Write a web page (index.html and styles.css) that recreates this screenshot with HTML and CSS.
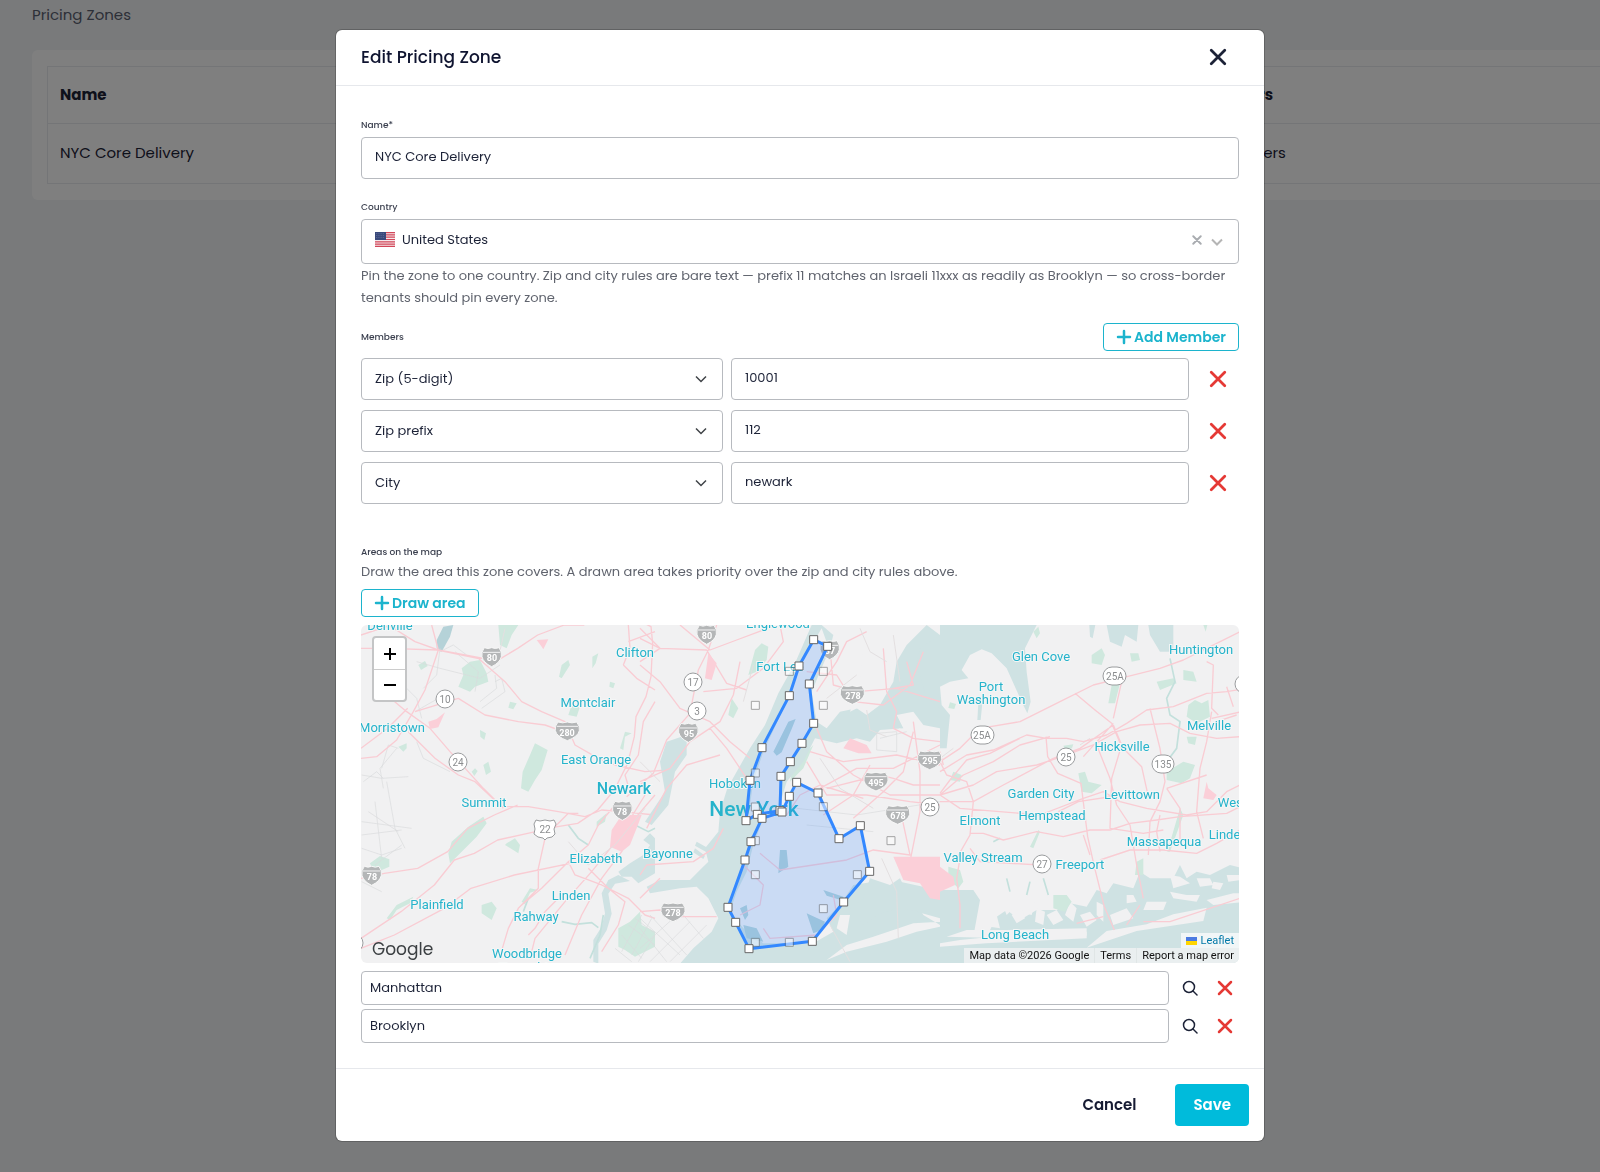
FILE: index.html
```html
<!DOCTYPE html>
<html lang="en">
<head>
<meta charset="utf-8">
<meta name="viewport" content="width=device-width, initial-scale=1">
<title>Pricing Zones</title>
<link rel="stylesheet" href="styles.css">
</head>
<body>
<svg class="sprite" aria-hidden="true">
  <symbol id="cross" viewBox="0 0 16 16"><path d="M2 2l12 12M14 2L2 14"/></symbol>
  <symbol id="plus" viewBox="0 0 16 16"><path d="M8 2v12M2 8h12"/></symbol>
  <symbol id="chevron" viewBox="0 0 12 12"><path d="M1 3.500l5 5 5-5"/></symbol>
  <symbol id="search" viewBox="0 0 16 16"><circle cx="7" cy="7" r="5.500"/><path d="M11 11l4 4"/></symbol>
  <g id="interstate"><path d="M-22-27q11 5 22 0 11 5 22 0 10 13 7 27Q25 18 0 30-25 18-29 0q-3-14 7-27z" fill="#b4b6b7" stroke="#f7f7f7" stroke-width="3"/><path d="M-26-13h52" stroke="#f4f4f4" stroke-width="3"/></g>
  <g id="interstate-wide"><path d="M-28-26q14 5 28 0 14 5 28 0 11 13 8 26Q32 18 0 30-32 18-36 0q-3-13 8-26z" fill="#b4b6b7" stroke="#f7f7f7" stroke-width="3"/><path d="M-32-13h64" stroke="#f4f4f4" stroke-width="3"/></g>
</svg>

<main class="page">
  <h1 class="page-title">Pricing Zones</h1>
  <section class="card">
    <table class="zones">
      <thead><tr><th class="zones-name">Name</th><th>Members</th></tr></thead>
      <tbody><tr><td>NYC Core Delivery</td><td>3 members</td></tr></tbody>
    </table>
  </section>
</main>

<div class="overlay">
<form class="modal" role="dialog" aria-labelledby="modal-title">
  <header class="modal-header">
    <h2 class="modal-title" id="modal-title">Edit Pricing Zone</h2>
    <button class="icon-button close" type="button" aria-label="Close"><svg class="icon"><use href="#cross"/></svg></button>
  </header>

  <div class="modal-body">
    <div class="field">
      <label class="label" for="zone-name">Name*</label>
      <input class="control" id="zone-name" type="text" value="NYC Core Delivery">
    </div>

    <div class="field">
      <label class="label" for="country">Country</label>
      <div class="select-wrap">
        <select class="control control-country" id="country"><option>United States</option></select>
        <svg class="flag" viewBox="0 0 20 15" aria-hidden="true">
          <rect width="20" height="15" fill="#f6e9eb"/>
          <path d="M0 .6h20M0 2.900h20M0 5.200h20M0 7.500h20M0 9.800h20M0 12.100h20M0 14.400h20" stroke="#d2475a" stroke-width="1.200"/>
          <rect width="11" height="8" fill="#3a4a7c"/>
          <path d="M1 1.500h9M1 3.500h9M1 5.500h9" stroke="#7682a8" stroke-width=".6" stroke-dasharray=".8 1"/>
        </svg>
        <button class="clear" type="button" aria-label="Clear country"><svg class="icon"><use href="#cross"/></svg></button>
        <svg class="chevron chevron-light" aria-hidden="true"><use href="#chevron"/></svg>
      </div>
      <p class="help">Pin the zone to one country. Zip and city rules are bare text — prefix 11 matches an Israeli 11xxx as readily as Brooklyn — so cross-border tenants should pin every zone.</p>
    </div>

    <section class="members">
      <div class="section-head">
        <h3 class="label">Members</h3>
        <button class="outline-button" type="button"><svg class="icon"><use href="#plus"/></svg>Add Member</button>
      </div>
      <div class="member-row">
        <div class="select-wrap"><select class="control" aria-label="Rule type"><option>Zip (5-digit)</option></select><svg class="chevron" aria-hidden="true"><use href="#chevron"/></svg></div>
        <input class="control" type="text" value="10001" aria-label="Rule value">
        <button class="icon-button danger" type="button" aria-label="Remove member"><svg class="icon"><use href="#cross"/></svg></button>
      </div>
      <div class="member-row">
        <div class="select-wrap"><select class="control" aria-label="Rule type"><option>Zip prefix</option></select><svg class="chevron" aria-hidden="true"><use href="#chevron"/></svg></div>
        <input class="control" type="text" value="112" aria-label="Rule value">
        <button class="icon-button danger" type="button" aria-label="Remove member"><svg class="icon"><use href="#cross"/></svg></button>
      </div>
      <div class="member-row">
        <div class="select-wrap"><select class="control" aria-label="Rule type"><option>City</option></select><svg class="chevron" aria-hidden="true"><use href="#chevron"/></svg></div>
        <input class="control" type="text" value="newark" aria-label="Rule value">
        <button class="icon-button danger" type="button" aria-label="Remove member"><svg class="icon"><use href="#cross"/></svg></button>
      </div>
    </section>

    <section class="areas">
      <h3 class="label">Areas on the map</h3>
      <p class="help">Draw the area this zone covers. A drawn area takes priority over the zip and city rules above.</p>
      <button class="outline-button" type="button"><svg class="icon"><use href="#plus"/></svg>Draw area</button>

      <div class="map">
        <svg class="map-canvas" viewBox="0 0 878 338" preserveAspectRatio="xMidYMid slice" role="img" aria-label="Map of the New York area">
          <rect width="878" height="338" fill="#f1f1f2"/>

          <!-- west: New Jersey -->
          <g transform="scale(.33333) translate(-18 -30)">
            <g class="park">
              <path d="M430 30h60l-20 30-15 40-20-10zM345 140l30-5 20 40 5 25-40 15-15 15-35-15 15-35-5-20zM620 150l20-15 5 15-25 40-8-5zM712 125l18-10-8 30-10 15zM765 200l15 5-5 15-12-5zM465 260l20 5-10 18-15-5zM525 420l15-35 38 20-18 60-20 30-20 35-22-10 5-50zM290 680l50-45 45-30 10 20-30 40-60 60-20 20-5-30zM455 685l25-15 15 20-5 25-40-25zM45 745l30-22 28 10v22l-45 20zM380 870l30-10 15 20-15 35-30-20zM95 910l30-40 50-25-10 20-40 20-20 30zM350 470l10-10 8 8-10 15zM385 450l15-10 8 30-15 10zM130 395l25-10v15l-10 10zM375 345l18 10-5 20-12-10zM810 350l20 5-20 10-5 40-10-5zM190 150l20-12 8 15-20 12zM725 620l30-25-5 25-25 15zM500 860l25-40 25 5-25 8-15 35zM640 300l10-30 25 5-10 30zM790 940l35-20 30-30 5 40 40 20v45l-60 30-30-20-20-10z"/>
            </g>
            <path class="deep" d="M245 75l20-40 30-5-10 35-25 45-15-10z"/>
            <path class="water" d="M900 670l-15-15-20 20 20 15-20 30-40 25-35 25 10 15 30 0 20 20 50-30zM790 780l-30 15-20 40 10 60-10 40-25 40 0 65 15 6 0-60 25-40 15-50-10-60 20-30 45-8z"/>
            <path class="creek" d="M620 920l40 8 50-5 20 15M640 630l30 40 30 20M840 630l40 20 20-10M520 850l-15 40M745 900l-10 60-30 70"/>
            <path class="minor" d="M185 140l70 20 120 30 60-40M180 290l70-40M375 260l50-40-5-40M20 480l60 10 80-5M125 400l-50 60 10 60M20 620l150 20M20 660l120-15M40 590l90 60M95 500l25 140 30 60M20 700l60 20 60-20M185 380l20 50 80 40M60 560l20 170M300 110l70 60-10 60M130 400l-30-10-20 70M20 800l60 30M200 310l-15-60-40-40M25 500l40-30 20 20M60 750l80-60M255 100l-10 80-40 40M255 110l40-20 40 30M420 200l20-10 10 40-70 50"/>
            <g class="minor">
              <path d="M820 930l80 60M800 960l60 70M840 910l60 45M780 1000l50 40M830 1020l60-110M850 1040l50-80M800 1010l60-110"/>
            </g>
            <g class="road">
              <path d="M18 100l80 0 150 5 120 25 70 0 50-30 60-40 80-30h60M18 60l90-30M100 30l80 50 70 25 160 30M230 30l20 75-40 120-35 65-50 85-60 50-47 5M100 180l-5 60 60 50 70 50 60 70 100 110 60 60M18 400l80-60 60-60M180 290l130-40 80 50 100 20 80 10 70 25M370 130l80 70 50 60 60 30 70 30 30 70 70 40 50 20 90 20 70-5M160 350l80 80 70 50 50 20 80 75 80 0 90 15 80 15 50-20 60 5 100 10M18 790l70-15 100-15 90-50 60-70 80-40 70-30M18 970l120-80 100-80 60-75 60-20 70-40 90-20 90-20 60-10 60-40 50-60 40-80 20-80 5-60 30-60 15-60 5-100-5-50-120-60-30-20M805 150l40 40 55 35M820 30l5 70-20 50M820 80l80-30M18 1000l100-40 150-80 80-60 130-40 240-50M570 670l-20 90 0 60-60 60-30 60-18 60M500 870l60-50 80-80 60-50 30-60 50-60M640 740l20 40 80 30 80 40 50 50 30 10M900 540l-60 70-40 100-60 80-60 110-50 120M870 540l-80 130-80 100-80 90-90 110-15 60M900 260l-35 60-15 100-40 60 15 50M520 960l20-20 30-50 40-40M700 760l60 60 50 40-20 70-50 80M590 645l50-50 30 0"/>
            </g>
            <path class="airport" d="M800 600h60l-15 40-20 50-25 20-35-15 5-50zM545 75l35-2-15 30-8-12zM220 320l25-8 25-20-20 45-25 5z"/>
            <path class="rail" d="M640 680l60 70 80-60 90-110M450 40l-20 90"/>
          </g>

          <!-- centre: Hudson, Manhattan, Brooklyn, Queens -->
          <g transform="scale(.33333) translate(837 -30)">
            <g class="park">
              <path d="M345 105l20-20 20 10-5 40-30 35-25 10zM275 250l20 30-15 30-15-10zM690 200l15 10-10 40-12-10zM460 450l60-60-30 70-40 40zM630 480l25 5 5 40-20 25-25-20zM560 120l10-20 5 30z"/>
            </g>
            <path class="water" d="M515 30L465 145 415 235 375 330 330 400 290 470 262 520 240 590 235 650 195 700 205 740 185 760 150 795 60 795 20 815 30 835 120 820 170 815 205 850 235 910 215 950 160 1000 120 1046H900V600L860 700 820 760 740 775 700 800 640 810 600 870 560 910 580 950 520 985 370 985 310 940 270 890 290 830 320 770 340 690 370 610 420 590 425 550 440 500 490 440 525 370 590 385 650 370 690 380 720 345 790 340 770 300 820 290 850 330 900 340V60L860 30 800 90 770 140 760 200 720 270 680 300 650 280 600 290 560 340 530 320 515 230 570 100 580 60 545 30z"/>
            <!-- Manhattan -->
            <path class="land" d="M545 40L565 95 505 200 515 330 490 380 420 485 415 580 350 600 325 605 340 500 370 410 445 250 480 150z"/>
            <path class="land" d="M640 30l30 60-10 110-30 90 60-30 50-30 15-90 30-80 35-30z"/>
            <path class="land" d="M590 400l100 0 90-60 60 60 60 20v300l-130 40-80 20-80-30z"/>
            <!-- Rockaway, Jamaica and the south shore -->
            <path class="land" d="M560 1035l60-25 120-30 90-30 70-15v-15l-80 5-120 40-80 25zM600 900l30 0-10 60-30-20zM680 720h220v210l-50-30-30-50-60-20-60-30-60-20z"/>
            <path class="water" d="M690 790l60 20 30-20 20 40 60 30-10 30-80-10-60 20-40 30-40-50 40-30zM780 800l90 20 30 30v60l-70-20zM840 100l60-40v220l-40-30-30-100z"/>
            <path class="water" d="M60 440l20-60 60-20 0 60-35 50-20 100-50 60-20-10 60-90zM170 680l35 20-5 12-35-20zM165 700l30 22-5 10-30-20z"/>
            <path class="deep" d="M420 705l20 0 5 50-30 20zM300 880l20-10 5 30-10 15zM310 930l40 10 20 40-50-10zM400 410l45-90 22-8-12 30-30 70-15 10z"/>
            <path class="deep" d="M500 895l55 25-10 25-25 10zM550 825l60 20 0 12-50-15z"/>
            <path class="rail" d="M680 285l10 60 50 20M540 430l60 90 100 60M725 730l45 100 5 140M570 930l60 110M760 60l20 140"/>
            <path class="minor" d="M710 355l60-5v60l-60-5zM720 370l80-20M0 940l80 100M0 910l120 110M30 900l110 120M0 1000l100-90M30 1040l120-120M90 1040l110-110M130 900l60 70M470 580l180 20 250-40M500 630l200 20"/>
            <g class="road">
              <path d="M0 70l60 30 140 5 60 100 60 20M230 30l-25 75-30 60-25 130-70 80-40 100-80 70M0 150l60 50 60 80 90 40 60 60 60 50M120 30l90 75 80-30 120-45M60 100l-60 40M190 230l100-10 80-60 60-80-10-50M0 500l90-40 60-80 90-60 40-80 20-100M20 640l60-120 60-70 100-30M210 340l50 60 60 90M0 780l20-30 140-10 60-40 30-60M0 890l60-5 60 20 110 0M530 230l60-90 30-60 60-30M570 100l10 110 70 20 120-10 130 40M500 170l90 10 50 80 90 10 80-60 40-100M730 100l10 130 30 60-10 50 60 30 80 10M510 410l100 30 160-20 130 30M530 340l30 70 80 70 110 60 150 0M560 520l160-40 40 10 60 20 80 0M500 440l60 100 120 0 130 20 90 10M540 520l110-60 110 0 140-70M780 580l30 140-110-15-80 30-200 30-60-50M640 610l90-80 60-60 30-120M370 940l20 30 140-10 60-60-10-60M310 750l60 60-10 60-60 30M440 600l40-60 60-30 130 40M820 320l20 150 0 120-30 150M800 140l20 70-60 10M690 450l-50 90-90 60M0 40l60 60M60 790l-60 60"/>
            </g>
            <path class="airport" d="M205 115l25 30-15 50-20-5zM610 400l20-30 50 20 15 25-40 0zM760 725h140v130l-30-5-30-45-50-10z"/>
            <path class="rail" d="M660 40l30 70 50 30M340 150l-30 110M0 440l60 60M560 250l90-70"/>
          </g>

          <!-- east: Long Island -->
          <g transform="scale(.33333) translate(1737 -30)">
            <path class="water" d="M0 30H290L255 100 260 170 272 260 262 295 245 260 200 160 155 115 125 103 90 120 65 165 85 190 30 200 0 215 5 270 30 300 20 400 0 400zM500 30h95l-5 50-35-20-10 35-35-15zM625 30h75v80l-40 0-30-50zM115 265l12 0-5 50-10 0zM448 30h18l-8 40-8-5zM0 985l60-10 150-15 230-10v20l-300 15-140 10v60h920V860l-100 10-20-15 80-20h60V740l-30 20-40-10-60 30-40-10-30 20-20-40-20 40-70 0-30-20-20 50-60-15-20 30-30-10-30 50-50-10-40 20-60 0-50 30-40-30-30 20-30 60-40 0 20-110-20-30H0z"/>
            <!-- barrier islands and marshes -->
            <path class="land" d="M440 998l60-50 120-20 80-30 100-20-10 40-200 30zM20 965l60-20 120 0 240-5v22l-240 8zM180 850l25 0 15 30-20 20zM215 900l30-20 10 30-25 15zM255 850l30 10-10 40-20-5zM290 880l25 10-5 40-25-10zM320 900l30-15 20 30-30 15zM390 860l20 20-10 40-25-20zM420 900l30-10 20 25-30 20zM150 890l20 10 10 40-30-5zM340 860l40 8-10 15-35-8zM510 900l50-20 20 30-60 20zM470 860l20 10 0 50-20-20zM620 860l60 0-10 25-60 0zM690 780l30 5 30 20-50 15zM770 790l40 0 10 20-40 5zM690 830l50 10 40 0-10 20-70-10zM820 800l30 5-10 20-25-5zM560 840l20 0 10 20-30 5zM860 780h40v15l-35 5z"/>
            <g class="park">
              <path d="M280 50l15-15 5 20-10 15zM455 120l30-20 10 20-10 30-30-5zM570 115l25 0 5 20-25 5zM515 210l25-5-15 60-20 0zM650 200l50-10 10 15-50 20zM730 165l30 5 10 30-40-5zM745 270l20-15 20 10 20-10 5 50-40 20-30-20zM680 470l50-30 35 10-15 40-25 15-45-10zM740 365l30 0-5 25-20-5zM415 475l20-5 10 30 40 10-30 25-30-5zM40 470l25 10-5 20-30-5zM720 580l10 20-40 110-8 0zM590 740l20-10 0 50-25 0zM25 755l35 10 10 35-15 20-30-30zM340 840l40 0 15 20-20 30-35-10zM30 262l18 5-5 15-18-3zM370 392l30-4-4 12-20 6zM270 695l25-50 5 5-20 50zM790 30l12 0-5 20z"/>
            </g>
            <path class="creek" d="M690 130l15 70-25 50 10 50 30 20-10 80-30 40M160 680l20-10M200 790l10 40M270 800l-10 40M310 790l15 50"/>
            <path class="airport" d="M0 755l40 30 5 25-45 20zM800 500l5 20 25 20-10 15-30-5z"/>
            <path class="rail" d="M0 430l40-30M420 390l30-20"/>
            <g class="road">
              <path d="M0 440l60-40 60-60 120-20 120-60 100-50 80-20 120-30 70-25 100-50 70-35M0 470l80-50 80-15 100-45 60 10 60 0 50 10 70-20 60-35 60-40 80-10 100-40 60-5 60-10 60-20M0 540l70-60 90-40 80-50 90-25M0 540l100-30 70-40 120-20 90-30 80-30 70-40 70-20 90-5 60 30 80 15 140-10M0 535l30-40 50-60 70-20 90-45M0 560l100 0 90-50 150-80 80-30 100-70M0 540l60 40 240 20 130-50 60-20 50 30 80 20 120 20 60-10 60-60 40-20M90 655l40 0 60 20 100-25 80 15 80-20 60 0 60-20 80-10 70-10 140-10 60-30 30-20M0 440l20 40 60 20 20 60-10 100-40 70M318 365l5 60 30 50 70 30 20 160 20 90 30 120 30 70M405 235l60 50 50 40 30 70 60 60 20 90M520 325l-90 100M545 200l-25 110M520 330l25 60-30 100-5 150 100 15 60-10M630 280l30 120 15 100-15 60-30 60-5 100M470 390l40 100 20 80 40 60 20 120 20 100M800 140l20 10-5 130 20 20M815 290l-15 90-20 80-10 130 20 80M815 310l90-20M680 520l40 60 0 100M680 520l120-40M660 600l-10 50 10 60M60 730l-10 60 10 80 0 70M90 700l30 40 180 10M480 735l90-30 100 0 100 10 60-30 70-40M450 720l-20-60M610 920l80 0 210-70M410 925l80-20M560 930l40-60M0 410l10 40M830 320l60-20M545 540l-130 20-60 30M860 215l20 60"/>
            </g>
          </g>

          <g class="shields">
            <g transform="scale(.33333)">
              <use href="#interstate" x="392" y="95"/><use href="#interstate-wide" x="619" y="317"/><use href="#interstate" x="784" y="556"/><use href="#interstate" x="32" y="751"/>
              <use href="#interstate" x="1037" y="28"/><use href="#interstate" x="982" y="322"/><use href="#interstate-wide" x="1474" y="208"/><use href="#interstate-wide" x="936" y="860"/><use href="#interstate-wide" x="1545" y="468"/><use href="#interstate-wide" x="1610" y="568"/><use href="#interstate-wide" x="1706" y="404"/><use href="#interstate" x="1406" y="74"/>
            </g>
            <g class="shield-white">
              <circle cx="84" cy="74" r="9"/><circle cx="97" cy="137" r="9"/><circle cx="332" cy="57" r="9"/><circle cx="336" cy="86" r="9"/><circle cx="569" cy="182" r="9"/><circle cx="705" cy="132" r="9"/><circle cx="681" cy="239" r="9"/><circle cx="-7" cy="318" r="9"/>
              <rect x="742" y="42" width="23" height="18" rx="9"/><rect x="610" y="101" width="23" height="18" rx="9"/><rect x="791" y="130" width="22" height="18" rx="9"/><rect x="874" y="50" width="22" height="18" rx="9"/>
              <path d="M175 195l4 1 5-1 5 1 4-1 2 4-2 5 1 5-3 3-5 1-2 2-2-2-5-1-4-3 1-5-1-5z"/>
            </g>
            <g class="shield-text">
              <text x="84" y="78">10</text><text x="97" y="141">24</text><text x="332" y="61">17</text><text x="336" y="90">3</text><text x="569" y="186">25</text><text x="705" y="136">25</text><text x="681" y="243">27</text><text x="754" y="55">25A</text><text x="621" y="114">25A</text><text x="802" y="143">135</text><text x="184" y="208">22</text>
            </g>
            <g class="interstate-text">
              <text x="131" y="36">80</text><text x="206" y="111">280</text><text x="261" y="190">78</text><text x="11" y="255">78</text><text x="346" y="14">80</text><text x="328" y="112">95</text><text x="492" y="74">278</text><text x="312" y="291">278</text><text x="515" y="161">495</text><text x="537" y="194">678</text><text x="569" y="139">295</text><text x="469" y="29">87</text>
            </g>
          </g>

          <g class="place">
            <text x="29" y="5">Denville</text><text x="274" y="32">Clifton</text><text x="227" y="82">Montclair</text><text x="31" y="107">Morristown</text><text x="235" y="139">East Orange</text><text x="123" y="182">Summit</text><text x="235" y="238">Elizabeth</text><text x="307" y="233">Bayonne</text><text x="210" y="275">Linden</text><text x="76" y="284">Plainfield</text><text x="175" y="296">Rahway</text><text x="166" y="333">Woodbridge</text><text x="166" y="347">Township</text>
            <text x="417" y="3">Englewood</text><text x="419" y="46">Fort Lee</text><text x="374" y="163">Hoboken</text>
            <text x="680" y="36">Glen Cove</text><text x="630" y="66">Port</text><text x="630" y="79">Washington</text><text x="840" y="29">Huntington</text><text x="848" y="105">Melville</text><text x="761" y="126">Hicksville</text><text x="680" y="173">Garden City</text><text x="771" y="174">Levittown</text><text x="691" y="195">Hempstead</text><text x="619" y="200">Elmont</text><text x="803" y="221">Massapequa</text><text x="622" y="237">Valley Stream</text><text x="719" y="244">Freeport</text><text x="654" y="314">Long Beach</text><text x="885" y="182">West Islip</text><text x="882" y="214">Lindenhurst</text>
            <text class="place-newark" x="263" y="169">Newark</text><text class="place-city" x="393" y="191">New York</text>
          </g>

          <!-- drawn areas, with vertex and midpoint handles -->
          <g transform="scale(.33333) translate(837 -30)">
            <path class="area" d="M521 74L563 94 508 207 521 325 486 385 451 440 423 484 420 587 352 598 318 617 330 496 366 398 448 242 477 153z"/>
            <path class="area" d="M470 502L534 534 597 671 661 632 689 769 611 861 517 979 327 1001 287 922 264 877 315 735 333 680 366 610 426 591 448 544z"/>
            <g class="handle-mid">
              <path d="M436 157h24v24h-24zM538 157h24v24h-24zM334 259h24v24h-24zM538 259h24v24h-24zM334 462h24v24h-24zM334 564h24v24h-24zM538 563h24v24h-24zM334 665h24v24h-24zM741 665h24v24h-24zM334 767h24v24h-24zM640 767h24v24h-24zM538 869h24v24h-24zM334 970h24v24h-24zM436 970h24v24h-24z"/>
            </g>
            <g class="handle">
              <path d="M509 62h24v24h-24zM551 82h24v24h-24zM496 195h24v24h-24zM509 313h24v24h-24zM474 373h24v24h-24zM439 428h24v24h-24zM411 472h24v24h-24zM408 575h24v24h-24zM340 586h24v24h-24zM306 605h24v24h-24zM318 484h24v24h-24zM354 386h24v24h-24zM436 230h24v24h-24zM465 141h24v24h-24z"/>
              <path d="M458 490h24v24h-24zM522 522h24v24h-24zM585 659h24v24h-24zM649 620h24v24h-24zM677 757h24v24h-24zM599 849h24v24h-24zM505 967h24v24h-24zM315 989h24v24h-24zM275 910h24v24h-24zM252 865h24v24h-24zM303 723h24v24h-24zM321 668h24v24h-24zM354 598h24v24h-24zM436 532h24v24h-24z"/>
              <path d="M414 579h24v24h-24z"/>
            </g>
          </g>
        </svg>
        <div class="zoom">
          <button class="zoom-button" type="button" aria-label="Zoom in"><svg class="icon"><use href="#plus"/></svg></button>
          <button class="zoom-button" type="button" aria-label="Zoom out"><svg class="icon" viewBox="0 0 16 16"><path d="M2 8h12"/></svg></button>
        </div>
        <span class="map-logo">Google</span>
        <div class="credits">
          <a class="leaflet" href="#leaflet"><svg class="ua" viewBox="0 0 11 8" aria-hidden="true"><path fill="#4c7be1" d="M0 0h11v4H0z"/><path fill="#ffd500" d="M0 4h11v4H0z"/></svg>Leaflet</a>
          <div class="credit-bar"><span class="credit">Map data ©2026 Google</span><a class="credit" href="#terms">Terms</a><a class="credit" href="#report">Report a map error</a></div>
        </div>
      </div>

      <div class="area-row">
        <input class="control control-small" type="text" value="Manhattan" aria-label="Area name">
        <button class="icon-button find" type="button" aria-label="Show on map"><svg class="icon"><use href="#search"/></svg></button>
        <button class="icon-button danger" type="button" aria-label="Remove area"><svg class="icon"><use href="#cross"/></svg></button>
      </div>
      <div class="area-row">
        <input class="control control-small" type="text" value="Brooklyn" aria-label="Area name">
        <button class="icon-button find" type="button" aria-label="Show on map"><svg class="icon"><use href="#search"/></svg></button>
        <button class="icon-button danger" type="button" aria-label="Remove area"><svg class="icon"><use href="#cross"/></svg></button>
      </div>
    </section>
  </div>

  <footer class="modal-footer">
    <button class="button" type="button">Cancel</button>
    <button class="button button-primary" type="submit">Save</button>
  </footer>
</form>
</div>
</body>
</html>
```
FILE: styles.css
```css
* { box-sizing: border-box; }

body {
  margin: 0;
  min-height: 100vh;
  overflow: hidden;
  background: #f3f5f7;
  color: #1c2237;
  font-family: Poppins, Inter, sans-serif;
  font-size: 13px;
}

h1, h2, h3, p { margin: 0; }
button, input, select { font: inherit; color: inherit; }
button { padding: 0; border: 0; background: none; cursor: pointer; }

.sprite { position: absolute; width: 0; height: 0; }
.icon {
  display: block;
  width: 16px;
  height: 16px;
  fill: none;
  stroke: currentColor;
  stroke-width: 2;
  stroke-linecap: round;
}

/* Page behind the dialog */
.page { padding-left: 32px; }
.page-title {
  padding: 3px 0 23px;
  font-size: 15px;
  font-weight: 400;
  line-height: 24px;
  color: #5a6070;
}
.card {
  padding: 16px 0 16px 15px;
  border-radius: 6px 0 0 6px;
  background: #fff;
}
.zones {
  width: 100%;
  border: 1px solid #e9ebee;
  border-right: 0;
  border-spacing: 0;
  font-size: 15px;
  text-align: left;
}
.zones th, .zones td { padding: 0 12px 2px; }
.zones th { height: 56px; font-weight: 700; }
.zones td { height: 60px; border-top: 1px solid #e9ebee; }
.zones th.zones-name { width: 1140px; }

/* Dialog */
.overlay {
  position: fixed;
  inset: 0;
  overflow: auto;
  padding: 30px 16px;
  background: rgba(0, 0, 0, .5);
}
.modal {
  max-width: 928px;
  margin: 0 auto;
  border-radius: 6px;
  background: #fff;
  box-shadow: 0 0 0 1px rgba(0, 0, 0, .2);
}
.modal-header {
  display: flex;
  align-items: center;
  justify-content: space-between;
  height: 56px;
  padding: 0 25px 2px;
  border-bottom: 1px solid #e6e8ec;
}
.modal-title { font-size: 17px; font-weight: 500; color: #0f1430; }
.modal-body { padding: 31px 25px 21px; }
.modal-footer {
  display: flex;
  justify-content: flex-end;
  gap: 21px;
  padding: 15px;
  border-top: 1px solid #e6e8ec;
}

/* Form */
.field + .field { margin-top: 20px; }
.label {
  display: block;
  font-size: 9px;
  font-weight: 500;
  line-height: 16px;
  color: #3a3f4e;
}
.field .label { margin-bottom: 4px; }
.control {
  display: block;
  width: 100%;
  min-width: 0;
  height: 42px;
  padding: 0 13px 2px;
  border: 1px solid #b7babf;
  border-radius: 4px;
  background: #fff;
  appearance: none;
}
.control-country { height: 45px; padding: 0 40px 4px; }
.control-small { height: 34px; padding: 0 8px 1px; }
.help { margin-top: 1px; line-height: 22px; color: #60646e; }

.select-wrap { position: relative; }
.chevron {
  position: absolute;
  top: 0;
  right: 16px;
  bottom: 0;
  width: 12px;
  height: 12px;
  margin: auto;
  fill: none;
  stroke: #3f4347;
  stroke-width: 1.5;
  pointer-events: none;
}
.chevron-light { stroke: #b5b5b5; stroke-width: 2; }
.flag {
  position: absolute;
  top: 13px;
  left: 14px;
  width: 20px;
  height: 15px;
  pointer-events: none;
}
.clear {
  position: absolute;
  top: 16px;
  right: 37px;
  color: #a9acb0;
}
.clear .icon { width: 10px; height: 10px; stroke-width: 3; }

.icon-button { display: grid; place-items: center; min-height: 28px; }
.close { width: 42px; }
.close .icon, .member-row .icon { width: 18px; height: 18px; }
.close .icon { stroke-width: 2.5; }
.danger { color: #e53935; }
.danger .icon { stroke-width: 2.5; }
.find .icon { stroke-width: 1.5; }

.members { margin-top: 14px; }
.section-head {
  display: flex;
  align-items: center;
  justify-content: space-between;
  margin-bottom: 7px;
}
.outline-button {
  display: flex;
  align-items: center;
  gap: 2px;
  width: fit-content;
  height: 28px;
  padding: 0 12px;
  border: 1px solid #1cb4cd;
  border-radius: 4px;
  color: #1cb4cd;
  font-size: 14px;
  font-weight: 600;
}
.outline-button .icon { stroke-width: 2.5; }
.member-row {
  display: grid;
  grid-template-columns: 362fr 458fr 42px;
  gap: 8px;
  margin-bottom: 10px;
}
.areas { padding-top: 30px; }
.areas .help { margin-bottom: 6px; }
.area-row {
  display: grid;
  grid-template-columns: 1fr 28px 28px;
  align-items: center;
  gap: 7px;
  margin-bottom: 4px;
}

.button {
  height: 42px;
  padding: 0 18px 1px;
  border-radius: 4px;
  font-size: 15px;
  font-weight: 600;
  color: #161b33;
}
.button-primary { background: #00bbdb; color: #fff; }

/* Map */
.map {
  position: relative;
  height: 338px;
  margin: 8px 0;
  overflow: hidden;
  border-radius: 6px;
  font-family: Roboto, sans-serif;
}
.map-canvas { display: block; width: 100%; height: 100%; }
.water { fill: #cfe2e3; }
.deep { fill: #b5d2d8; }
.land { fill: #f1f1f2; }
.park { fill: #cfe8de; }
.airport { fill: #fbcfd8; }
.road { fill: none; stroke: #f9ccd3; stroke-width: 4; stroke-linejoin: round; }
.rail { fill: none; stroke: #e3dfe0; stroke-width: 3; }
.minor { fill: none; stroke: #d9dbdc; stroke-width: 2; }
.creek { fill: none; stroke: #c3e0dc; stroke-width: 5; }
.shield-white { fill: #fff; stroke: #9a9c9e; }
.shield-text, .interstate-text { fill: #8b8d8f; font-size: 10px; text-anchor: middle; }
.interstate-text { fill: #fff; font-weight: 700; font-size: 9px; }
.place {
  fill: #26b3cb;
  stroke: #f4f6f6;
  stroke-width: 2;
  paint-order: stroke;
  font-size: 13px;
  text-anchor: middle;
}
.place-newark { font-size: 16px; font-weight: 500; }
.place-city { font-size: 21px; font-weight: 500; stroke: none; }
.area {
  fill: rgba(51, 136, 255, .2);
  stroke: #3388ff;
  stroke-width: 9;
  stroke-linejoin: round;
}
.handle { fill: #fff; stroke: #666; stroke-width: 3; }
.handle-mid { fill: #fff; stroke: #555; stroke-width: 3; opacity: .5; }

.zoom {
  position: absolute;
  top: 11px;
  left: 11px;
  border: 2px solid #c4c5c6;
  border-radius: 4px;
  background: #fff;
}
.zoom-button {
  display: grid;
  place-items: center;
  width: 31px;
  height: 31px;
  color: #000;
}
.zoom-button + .zoom-button { border-top: 1px solid #ccc; }
.zoom .icon { stroke-width: 2; stroke-linecap: butt; }
.map-logo {
  position: absolute;
  bottom: 2px;
  left: 11px;
  color: #3c4043;
  font-family: Poppins, Lato, sans-serif;
  font-size: 17px;
  line-height: 24px;
}
.credits {
  position: absolute;
  right: 0;
  bottom: 0;
  display: flex;
  flex-direction: column;
  align-items: flex-end;
  font-size: 11px;
  line-height: 15px;
}
.leaflet {
  display: flex;
  align-items: center;
  gap: 4px;
  padding: 0 5px;
  background: rgba(255, 255, 255, .7);
  color: #0078a8;
  text-decoration: none;
}
.ua { width: 11px; height: 8px; }
.credit-bar { display: flex; background: rgba(245, 245, 245, .7); }
.credit { padding: 0 5px; color: #111; text-decoration: none; }
.credit + .credit { border-left: 1px solid #e0e6e6; }
```
